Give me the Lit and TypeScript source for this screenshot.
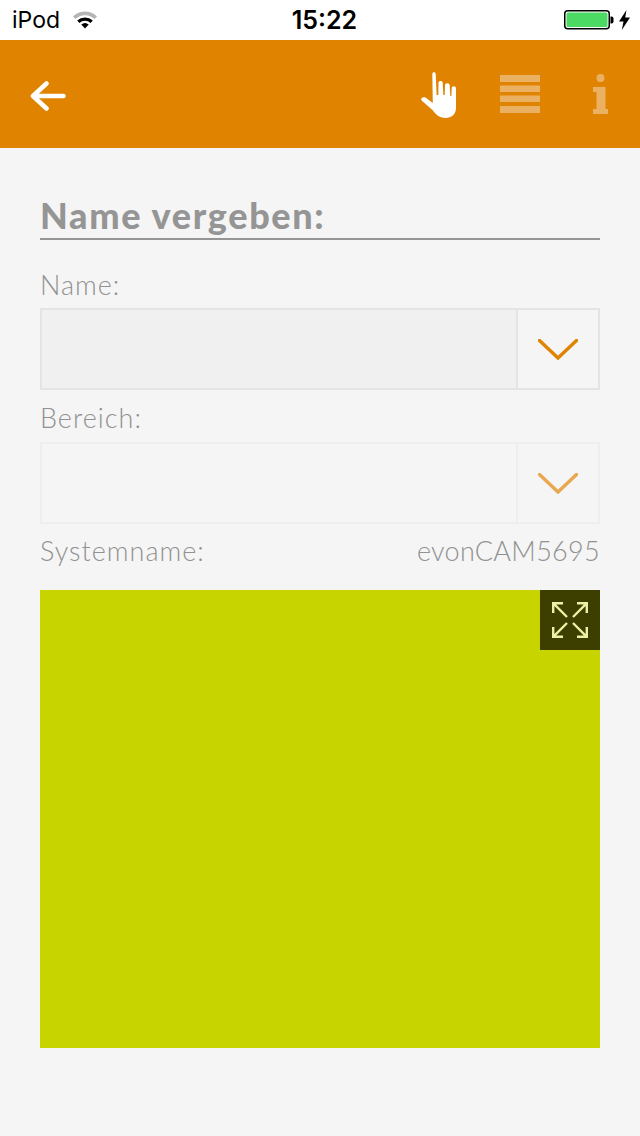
import { LitElement, html, css, svg } from "lit";
import { customElement } from "lit/decorators.js";

const chevron = svg`<path d="M1.5 1.5 L20 19 L38.5 1.5" fill="none" stroke="currentColor" stroke-width="3.4" stroke-linecap="round" stroke-linejoin="miter"/>`;

@customElement("app-root")
export class AppRoot extends LitElement {
  static styles = css`
    :host { display: block; width: 640px; height: 1136px; background: #f5f5f5; overflow: hidden; font-family: "Lato", "Liberation Sans", sans-serif; }
    .status { height: 40px; background: #fff; display: flex; align-items: center; padding: 0 10px 0 12px; box-sizing: border-box; position: relative; font-family: "Inter", "Liberation Sans", sans-serif; color: #000; }
    .carrier { font-size: 23px; line-height: 40px; font-weight: 400; }
    .wifi { width: 26px; height: 20px; margin-left: 12px; margin-top: -1px; display: block; }
    .time { position: absolute; left: 9px; right: 0; top: 0; text-align: center; font-size: 25px; font-weight: 600; line-height: 40px; }
    .battery-wrap { margin-left: auto; display: flex; align-items: center; gap: 5px; }
    .battery { display: block; }
    .bar { height: 108px; background: #e08300; display: flex; align-items: center; padding: 0 32px 0 30px; box-sizing: border-box; }
    .bar svg { display: block; }
    .spacer { flex: 1; }
    .back { margin-top: 4px; }
    .hand { margin-right: 43px; margin-top: 4px; }
    .menu { margin-right: 53px; }
    .content { padding: 40px 40px 0; }
    h1 { margin: 0; height: 52px; box-sizing: border-box; border-bottom: 2px solid #959595; font-size: 36px; line-height: 54px; font-weight: 900; color: #959595; letter-spacing: 1.65px; }
    .label { font-size: 27px; font-weight: 300; color: #919191; letter-spacing: 1px; }
    .name-label { margin-top: 28px; height: 40px; line-height: 34px; }
    .area-label { height: 52px; line-height: 56px; }
    .select { height: 82px; box-sizing: border-box; display: flex; border: 2px solid #e4e4e4; }
    .select .field { flex: 1; background: #f0f0f0; }
    .select .arrow { width: 82px; box-sizing: border-box; border-left: 2px solid #e4e4e4; display: flex; align-items: center; justify-content: center; color: #e08300; }
    .select.off { border-color: #eeeeee; }
    .select.off .field { background: transparent; }
    .select.off .arrow { border-left-color: #eeeeee; color: #e9a84f; }
    .sys { display: flex; justify-content: space-between; height: 66px; line-height: 54px; }
    .sys .value { letter-spacing: 0.3px; }
    .preview { height: 458px; background: #c8d400; display: flex; justify-content: flex-end; align-items: flex-start; }
    .expand { width: 60px; height: 60px; background: #3d3f00; display: flex; align-items: center; justify-content: center; }
  `;

  render() {
    return html`
      <div class="status">
        <span class="carrier">iPod</span>
        <svg class="wifi" viewBox="0 0 26 20">
          <path d="M1 6.5 A17 17 0 0 1 25 6.5 L22.6 9 A14 14 0 0 0 3.4 9 Z" fill="#b5b5b5"/>
          <path d="M5.2 10.6 A11.4 11.4 0 0 1 20.8 10.6 L18.6 12.9 A8.4 8.4 0 0 0 7.4 12.9 Z" fill="#000"/>
          <path d="M9.3 14.6 A5.6 5.6 0 0 1 16.7 14.6 L13 18.6 Z" fill="#000"/>
        </svg>
        <span class="time">15:22</span>
        <div class="battery-wrap">
          <svg class="battery" width="50" height="20" viewBox="0 0 50 20">
            <rect x="0.75" y="0.75" width="44.5" height="18" rx="3" fill="#fff" stroke="#000" stroke-width="1.5"/>
            <rect x="2.5" y="2.5" width="41" height="14.5" rx="1.5" fill="#4cd964"/>
            <path d="M46.5 6.5 h1 a2 2 0 0 1 2 2 v3 a2 2 0 0 1 -2 2 h-1 Z" fill="#000"/>
          </svg>
          <svg width="11" height="20" viewBox="0 0 11 20">
            <path d="M7.5 0 L0 11.5 H4.5 L2.8 20 L11 7.5 H6.2 Z" fill="#000"/>
          </svg>
        </div>
      </div>
      <div class="bar">
        <svg class="back" width="38" height="32" viewBox="0 0 38 32">
          <path d="M3 16 H33.5 M16.5 3.5 L3 16 L16.5 28.5" fill="none" stroke="#fff" stroke-width="4.5" stroke-linecap="round" stroke-linejoin="round"/>
        </svg>
        <div class="spacer"></div>
        <svg class="hand" width="36" height="48" viewBox="0 0 36 48">
          <path fill="#fff" d="M11.3 2 C11.3 -0.4 14.7 -0.4 14.7 2 L15.6 23 L17.3 23 L17.5 11 C17.5 8.4 21.7 8.4 21.7 11 L22.3 23 L23.7 23 L24 13.5 C24 10.6 28.7 10.6 28.7 13.5 L29.3 24 L30.4 24 L30.7 16.5 C30.7 13.6 35 13.6 35 16.5 L35 36 C35 42.5 30 46 25 46 C19 46 15 43 11.5 38 L0.6 28.5 C-0.8 26 2 24.5 4.5 25.5 L11.8 31 Z"/>
        </svg>
        <svg class="menu" width="40" height="38" viewBox="0 0 40 38">
          <g fill="#ebb163">
            <rect x="0" y="0" width="40" height="7"/>
            <rect x="0" y="10.5" width="40" height="6.5"/>
            <rect x="0" y="20.5" width="40" height="6.5"/>
            <rect x="0" y="31" width="40" height="7"/>
          </g>
        </svg>
        <svg width="15" height="40" viewBox="0 0 15 40">
          <circle cx="7.5" cy="4" r="4" fill="#ebb163"/>
          <path fill="#ebb163" d="M0 13 H12.5 V35 H15 V40 H0 V35 H3.5 V18 H0 Z"/>
        </svg>
      </div>
      <div class="content">
        <h1>Name vergeben:</h1>
        <div class="label name-label">Name:</div>
        <div class="select">
          <div class="field"></div>
          <div class="arrow"><svg width="40" height="21" viewBox="0 0 40 21">${chevron}</svg></div>
        </div>
        <div class="label area-label">Bereich:</div>
        <div class="select off">
          <div class="field"></div>
          <div class="arrow"><svg width="40" height="21" viewBox="0 0 40 21">${chevron}</svg></div>
        </div>
        <div class="label sys"><span>Systemname:</span><span class="value">evonCAM5695</span></div>
        <div class="preview">
          <div class="expand">
            <svg width="36" height="36" viewBox="0 0 36 36" fill="none" stroke="#eef0a6" stroke-width="2.4">
              <path d="M1.2 11 V1.2 H11 M1.2 1.2 L15 15"/>
              <path d="M25 1.2 H34.8 V11 M34.8 1.2 L21 15"/>
              <path d="M1.2 25 V34.8 H11 M1.2 34.8 L15 21"/>
              <path d="M25 34.8 H34.8 V25 M34.8 34.8 L21 21"/>
            </svg>
          </div>
        </div>
      </div>
    `;
  }
}
